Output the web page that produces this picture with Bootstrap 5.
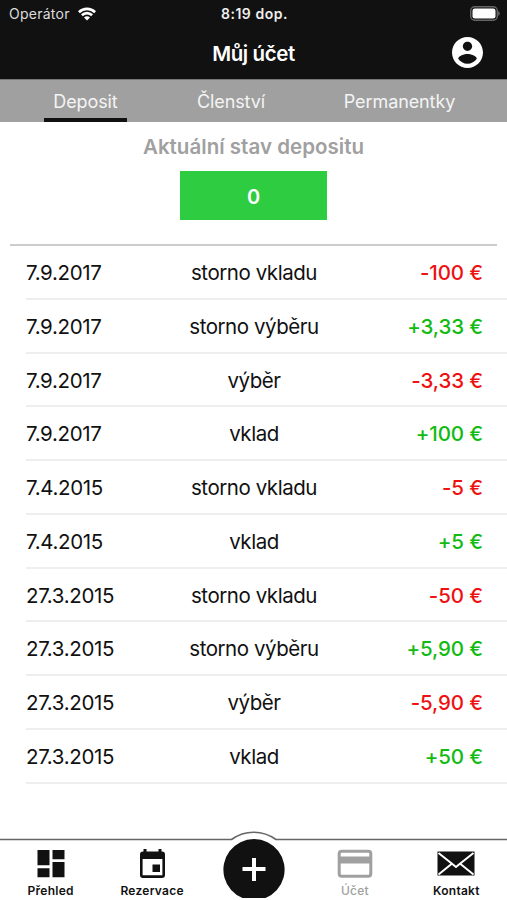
<!DOCTYPE html>
<html lang="cs">
<head>
<meta charset="utf-8">
<meta name="viewport" content="width=device-width, initial-scale=1">
<title>Můj účet</title>
<link href="https://cdn.jsdelivr.net/npm/bootstrap@5.3.0/dist/css/bootstrap.min.css" rel="stylesheet">
<style>
body{font-family:Inter,"Liberation Sans",sans-serif;height:900px;overflow:hidden;color:#111}
svg{display:block}
.top-bar{background:#111;height:79px;color:#fff}
.status{height:27px;font-size:14px;padding:0 7px 0 9px}
.status>*,.title-row>*{flex:1 1 0}
.carrier{color:#ddd;letter-spacing:.25px}
.clock{font-weight:600;letter-spacing:.55px;color:#eee}
.title-row{height:50px;padding-right:24px;padding-left:24px}
.title-row h1{font-size:20.5px;font-weight:600;letter-spacing:-.4px}
.tabs{background:#a0a0a0;height:43px;color:#f4f4f4;font-size:18px;letter-spacing:-.1px;border-top:1px solid #777}
.tabs a{color:inherit;text-decoration:none;height:42px;line-height:43px;text-align:center}
.tab-a{margin-left:44px;width:83px;border-bottom:4px solid #111}
.tab-b{margin-left:63px;width:82px}
.tab-c{margin-left:63px;width:129px}
.deposit{height:124px;padding-top:12px;margin:0 10px;border-bottom:2px solid #ccc}
.deposit h2{font-size:20.5px;line-height:26px;font-weight:600;letter-spacing:.03px;color:#a0a0a0;margin:0 0 11px}
.amount-box{width:147px;height:49px;padding-top:2px;background:#2ecc40;color:#fff;font-size:20px;font-weight:600}
.entries{margin-left:26px;font-size:20.5px}
.entry{height:53.75px;border-bottom:2px solid #eee;padding-right:24px;padding-top:3px}
.entry>*{flex:0 0 auto}
.entry .date{width:133px;letter-spacing:-.35px}
.entry .kind{width:190px;text-align:center;letter-spacing:-.45px}
.entry .sum{width:134px;text-align:right;font-weight:500;letter-spacing:-.1px}
.minus{color:#ee1111}.plus{color:#11bb11}
.bottom-bar{height:69px;margin-top:auto;position:relative}
.bar-line{position:absolute;left:0;top:0}
.bottom-bar a{flex:1 1 0;color:#111;text-decoration:none;font-size:12px;font-weight:600;letter-spacing:.25px;line-height:18px;padding-top:15px;position:relative}
.bottom-bar a svg{height:36px}
.bottom-bar a.current{color:#a0a0a0;font-weight:500}
</style>
</head>
<body class="d-flex flex-column bg-white">
<header class="top-bar">
  <div class="status d-flex align-items-center">
    <div class="carrier d-flex align-items-center">Operátor
      <svg class="ms-2" width="18" height="14" viewBox="0 0 18 14" fill="none" stroke="#fff" stroke-width="2.7"><path d="M.9 5.2a11.5 11.5 0 0 1 16.2 0M3.9 8.3a7.2 7.2 0 0 1 10.2 0"/><path d="M6 10.4a4.2 4.2 0 0 1 6 0l-3 3z" fill="#fff" stroke="none"/></svg>
    </div>
    <div class="clock text-center">8:19 dop.</div>
    <div class="d-flex justify-content-end">
      <svg width="30" height="15" viewBox="0 0 30 15"><rect x=".7" y=".7" width="26.6" height="13.6" rx="4" fill="#111" stroke="#666" stroke-width="1.4"/><rect x="2.5" y="2.5" width="23" height="10" rx="2.3" fill="#fff"/><path d="M28.3 5v5q1.4-.8 1.4-2.5T28.300 5" fill="#777"/></svg>
    </div>
  </div>
  <div class="title-row d-flex align-items-center">
    <span></span>
    <h1 class="m-0 pt-1 text-center text-nowrap">Můj účet</h1>
    <div class="d-flex justify-content-end">
      <svg width="31" height="31" viewBox="2 2 20 20" fill="#fff"><path d="M12 2C6.480 2 2 6.480 2 12s4.480 10 10 10 10-4.480 10-10S17.520 2 12 2zm0 3c1.660 0 3 1.340 3 3s-1.340 3-3 3-3-1.340-3-3 1.340-3 3-3zm0 14.200c-2.500 0-4.710-1.280-6-3.220.03-1.990 4-3.080 6-3.080 1.990 0 5.970 1.090 6 3.080-1.290 1.940-3.500 3.220-6 3.220z"/></svg>
    </div>
  </div>
</header>
<nav class="tabs d-flex">
  <a class="tab-a" href="#">Deposit</a><a class="tab-b" href="#">Členství</a><a class="tab-c" href="#">Permanentky</a>
</nav>
<section class="deposit d-flex flex-column align-items-center">
  <h2>Aktuální stav depositu</h2>
  <div class="amount-box d-flex align-items-center justify-content-center">0</div>
</section>
<main class="entries">
  <div class="entry d-flex align-items-center"><span class="date">7.9.2017</span><span class="kind">storno vkladu</span><span class="sum minus">-100 €</span></div>
  <div class="entry d-flex align-items-center"><span class="date">7.9.2017</span><span class="kind">storno výběru</span><span class="sum plus">+3,33 €</span></div>
  <div class="entry d-flex align-items-center"><span class="date">7.9.2017</span><span class="kind">výběr</span><span class="sum minus">-3,33 €</span></div>
  <div class="entry d-flex align-items-center"><span class="date">7.9.2017</span><span class="kind">vklad</span><span class="sum plus">+100 €</span></div>
  <div class="entry d-flex align-items-center"><span class="date">7.4.2015</span><span class="kind">storno vkladu</span><span class="sum minus">-5 €</span></div>
  <div class="entry d-flex align-items-center"><span class="date">7.4.2015</span><span class="kind">vklad</span><span class="sum plus">+5 €</span></div>
  <div class="entry d-flex align-items-center"><span class="date">27.3.2015</span><span class="kind">storno vkladu</span><span class="sum minus">-50 €</span></div>
  <div class="entry d-flex align-items-center"><span class="date">27.3.2015</span><span class="kind">storno výběru</span><span class="sum plus">+5,90 €</span></div>
  <div class="entry d-flex align-items-center"><span class="date">27.3.2015</span><span class="kind">výběr</span><span class="sum minus">-5,90 €</span></div>
  <div class="entry d-flex align-items-center"><span class="date">27.3.2015</span><span class="kind">vklad</span><span class="sum plus">+50 €</span></div>
</main>
<nav class="bottom-bar d-flex">
  <svg class="bar-line" width="507" height="69" viewBox="0 831 507 69"><path d="M0 839.500H231.500A37.500 37.500 0 0 1 276 839.500H507" fill="none" stroke="#666" stroke-width="1.600"/></svg>
  <a href="#" class="d-flex flex-column align-items-center">
    <svg width="36" viewBox="0 0 36 36" fill="#111"><path d="M4.500 4h12v15.300h-12zM19.500 4h12v9.300h-12zM4.500 22.200h12v9h-12zM19.500 16h12v15.200h-12z"/></svg>Přehled</a>
  <a href="#" class="d-flex flex-column align-items-center">
    <svg width="36" viewBox="0 0 36 36"><path fill="#111" fill-rule="evenodd" d="M9.500 3h3v2.500h12V3h3v2.500h.5a3 3 0 0 1 3 3V29a3 3 0 0 1-3 3H9a3 3 0 0 1-3-3V8.500a3 3 0 0 1 3-3h.5zM8.600 13v16.200h19.800V13z"/><path fill="#111" d="M18.500 18.500h7.500V26h-7.500z"/></svg>Rezervace</a>
  <a href="#" class="d-flex flex-column align-items-center pt-0" aria-label="Přidat">
    <svg style="height:69px" width="62" viewBox="222.500 831 62 69"><path d="M242 898a30.600 30.600 0 1 1 23 0z" fill="#111"/><path d="M253.500 858v23M242 869h23" stroke="#fff" stroke-width="4"/></svg></a>
  <a href="#" class="current d-flex flex-column align-items-center">
    <svg width="36" viewBox="0 0 36 36"><rect x="2.200" y="5.200" width="31.600" height="25" rx="2.500" fill="none" stroke="#a0a0a0" stroke-width="3"/><path d="M2 10.500h32v7H2z" fill="#a0a0a0"/></svg>Účet</a>
  <a href="#" class="d-flex flex-column align-items-center">
    <svg width="38" viewBox="0 0 38 36"><path d="M.5 5.500h37v24H.5z" fill="#111"/><path d="M1.500 7l14.500 11.500 3 2.500 3-2.500L36.500 7M1.500 28.500l13-10.500M36.500 28.500l-13-10.500" fill="none" stroke="#fff" stroke-width="2"/></svg>Kontakt</a>
</nav>
<script src="https://cdn.jsdelivr.net/npm/bootstrap@5.3.0/dist/js/bootstrap.bundle.min.js"></script>
</body>
</html>
